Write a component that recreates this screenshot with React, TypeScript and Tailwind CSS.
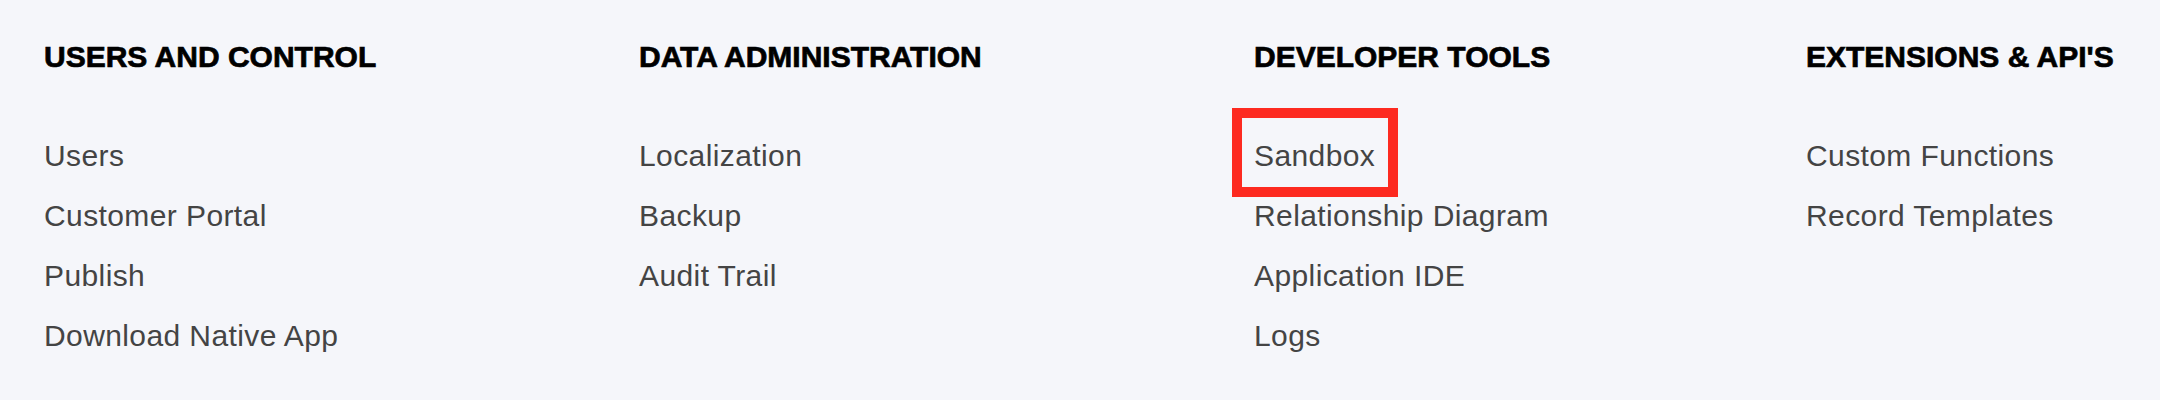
import React from "react";

type Col = { title: string; items: string[] };

const cols: Col[] = [
  { title: "USERS AND CONTROL", items: ["Users", "Customer Portal", "Publish", "Download Native App"] },
  { title: "DATA ADMINISTRATION", items: ["Localization", "Backup", "Audit Trail"] },
  { title: "DEVELOPER TOOLS", items: ["Sandbox", "Relationship Diagram", "Application IDE", "Logs"] },
  { title: "EXTENSIONS & API'S", items: ["Custom Functions", "Record Templates"] },
];

export default function App() {
  return (
    <div
      className="w-[2160px] h-[400px] bg-[#f5f6fa] overflow-hidden"
      style={{ fontFamily: '"Liberation Sans", Arial, sans-serif' }}
    >
      <div className="grid grid-cols-[595px_615px_552px_1fr] pl-[44px] pt-[39px]">
        {cols.map((c) => (
          <div key={c.title} className="flex flex-col">
            <h2 className="text-[30px] leading-[36px] font-bold text-black whitespace-nowrap [-webkit-text-stroke:0.7px_black]">
              {c.title}
            </h2>
            <ul className="mt-[51px] flex flex-col">
              {c.items.map((it) => (
                <li
                  key={it}
                  className="relative text-[30px] leading-[60px] text-[#444444] tracking-[0.4px] whitespace-nowrap"
                >
                  {it}
                  {it === "Sandbox" && (
                    <span className="absolute left-[-22px] top-[-18px] w-[166px] h-[89px] border-[10px] border-[#fd2a20] pointer-events-none" />
                  )}
                </li>
              ))}
            </ul>
          </div>
        ))}
      </div>
    </div>
  );
}
